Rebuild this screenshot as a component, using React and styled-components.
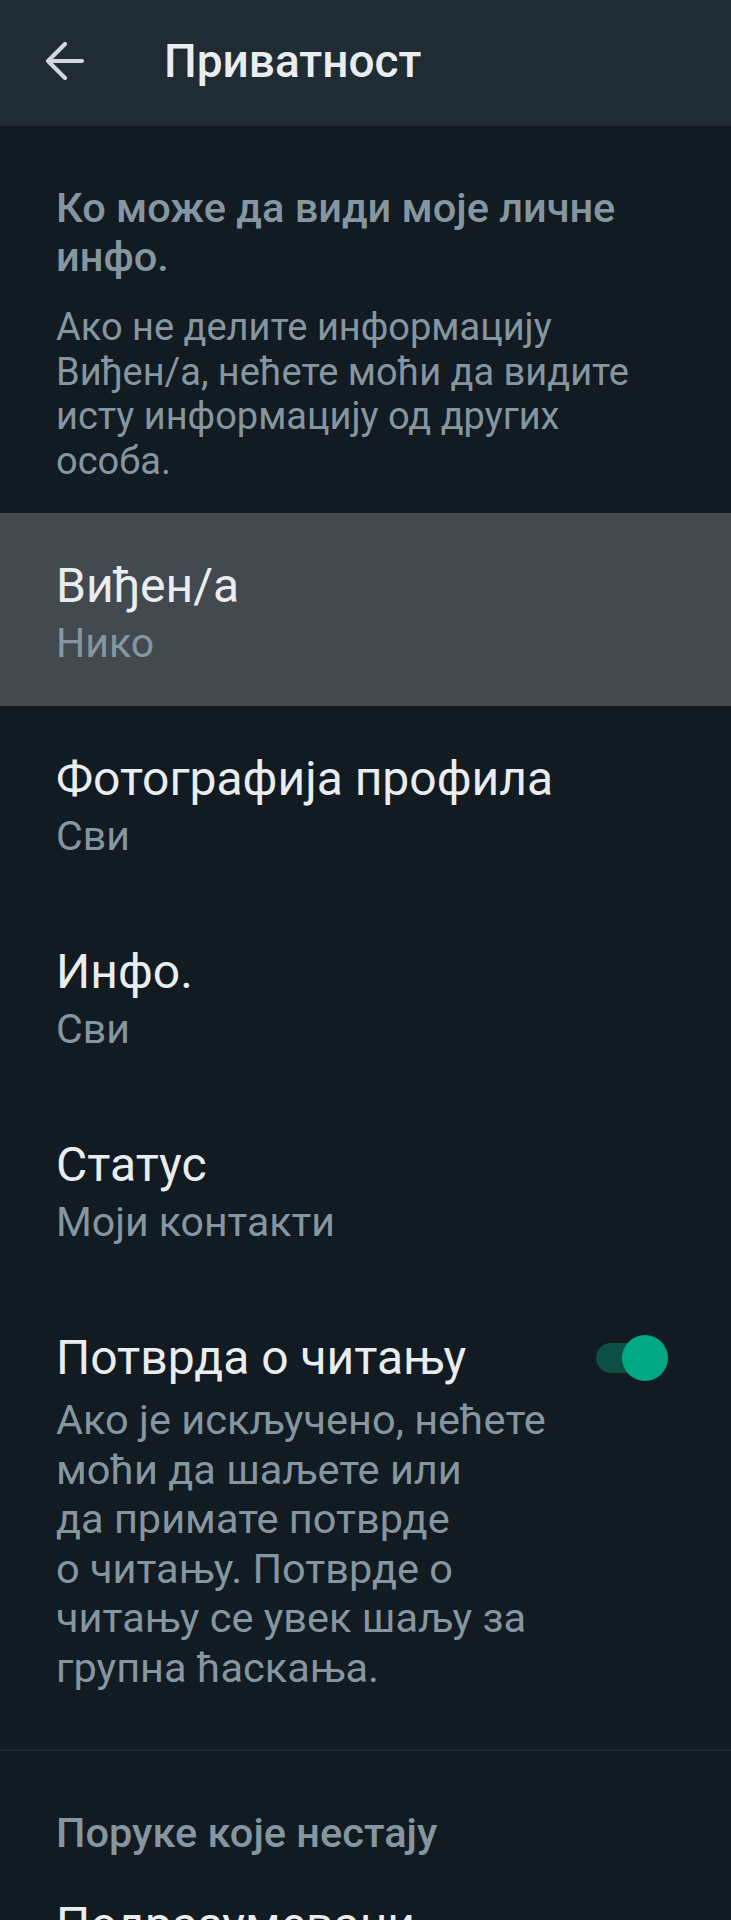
import React from "react";
import styled, { createGlobalStyle } from "styled-components";

const Global = createGlobalStyle`
  html, body { margin: 0; padding: 0; background: #121b22; }
  body { font-family: Roboto, "Noto Sans", sans-serif; -webkit-font-smoothing: antialiased; }
`;

const Page = styled.div`
  width: 731px;
  height: 1920px;
  background: #121b22;
  overflow: hidden;
`;

const TopBar = styled.header`
  height: 126px;
  background: #1f2c33;
  display: flex;
  align-items: center;
  padding-left: 45px;
  box-sizing: border-box;
`;

const BackButton = styled.button`
  border: 0;
  background: none;
  padding: 0;
  width: 40px;
  height: 40px;
  display: flex;
  align-items: center;
  justify-content: center;
  margin-right: 79px;
  margin-top: -4px;
`;

const Title = styled.h1`
  margin: 0;
  font-size: 46px;
  font-weight: 500;
  color: #e9edef;
  line-height: 1;
  margin-top: -4px;
`;

const Intro = styled.section`
  padding: 57px 56px 30px 56px;
`;

const SectionHeading = styled.h2`
  margin: 0;
  font-size: 41.5px;
  font-weight: 500;
  line-height: 49px;
  color: #8696a0;
  padding-top: ${(p) => p.$top || 0}px;
  padding-left: ${(p) => (p.$inset ? 56 : 0)}px;
`;

const IntroText = styled.p`
  margin: 24px 0 0 0;
  font-size: 38px;
  line-height: 44.5px;
  color: #8696a0;
`;

const Row = styled.div`
  display: flex;
  align-items: flex-start;
  padding: ${(p) => p.$top ?? 45}px 63px ${(p) => p.$bottom ?? 38}px 56px;
  background: ${(p) => (p.$active ? "#434a4f" : "transparent")};
`;

const RowText = styled.div`
  flex: 1;
  min-width: 0;
`;

const RowTitle = styled.div`
  font-size: 48px;
  line-height: 56px;
  color: #e9edef;
  white-space: nowrap;
`;

const RowValue = styled.div`
  font-size: 41px;
  line-height: 50px;
  margin-top: 4px;
  color: #8696a0;
`;

const RowDesc = styled.div`
  font-size: 41.5px;
  line-height: 49.5px;
  margin-top: 9px;
  color: #8696a0;
`;

const Toggle = styled.div`
  position: relative;
  width: 72px;
  height: 46px;
  margin-top: 5px;
  flex: none;
`;

const Track = styled.div`
  position: absolute;
  left: 0;
  top: 8px;
  width: 56px;
  height: 30px;
  border-radius: 15px;
  background: #0b5042;
`;

const Knob = styled.div`
  position: absolute;
  right: 0;
  top: 0;
  width: 46px;
  height: 46px;
  border-radius: 50%;
  background: #00a884;
`;

const Divider = styled.hr`
  margin: 0;
  border: 0;
  height: 2px;
  background: #1c262d;
`;

const ArrowIcon = () => (
  <svg width="40" height="38" viewBox="0 0 40 38" fill="none">
    <path
      d="M37 19H3M20 2L3 19l17 17"
      stroke="#d1d7db"
      strokeWidth="4.2"
      strokeLinecap="round"
      strokeLinejoin="round"
    />
  </svg>
);

const items = [
  { title: "Виђен/а", value: "Нико", active: true },
  { title: "Фотографија профила", value: "Сви" },
  { title: "Инфо.", value: "Сви" },
  { title: "Статус", value: "Моји контакти" },
];

export default function App() {
  return (
    <Page>
      <Global />
      <TopBar>
        <BackButton aria-label="Назад">
          <ArrowIcon />
        </BackButton>
        <Title>Приватност</Title>
      </TopBar>

      <Intro>
        <SectionHeading>
          Ко може да види моје личне
          <br />
          инфо.
        </SectionHeading>
        <IntroText>
          Ако не делите информацију
          <br />
          Виђен/а, нећете моћи да видите
          <br />
          исту информацију од других
          <br />
          особа.
        </IntroText>
      </Intro>

      {items.map((it) => (
        <Row key={it.title} $active={it.active}>
          <RowText>
            <RowTitle>{it.title}</RowTitle>
            <RowValue>{it.value}</RowValue>
          </RowText>
        </Row>
      ))}

      <Row $bottom={57}>
        <RowText>
          <RowTitle>Потврда о читању</RowTitle>
          <RowDesc>
            Ако је искључено, нећете
            <br />
            моћи да шаљете или
            <br />
            да примате потврде
            <br />
            о читању. Потврде о
            <br />
            читању се увек шаљу за
            <br />
            групна ћаскања.
          </RowDesc>
        </RowText>
        <Toggle>
          <Track />
          <Knob />
        </Toggle>
      </Row>

      <Divider />

      <SectionHeading $top={57} $inset>
        Поруке које нестају
      </SectionHeading>

      <Row $top={40}>
        <RowText>
          <RowTitle>
            Подразумевани
            <br />
            тајмер порука
          </RowTitle>
        </RowText>
      </Row>
    </Page>
  );
}
